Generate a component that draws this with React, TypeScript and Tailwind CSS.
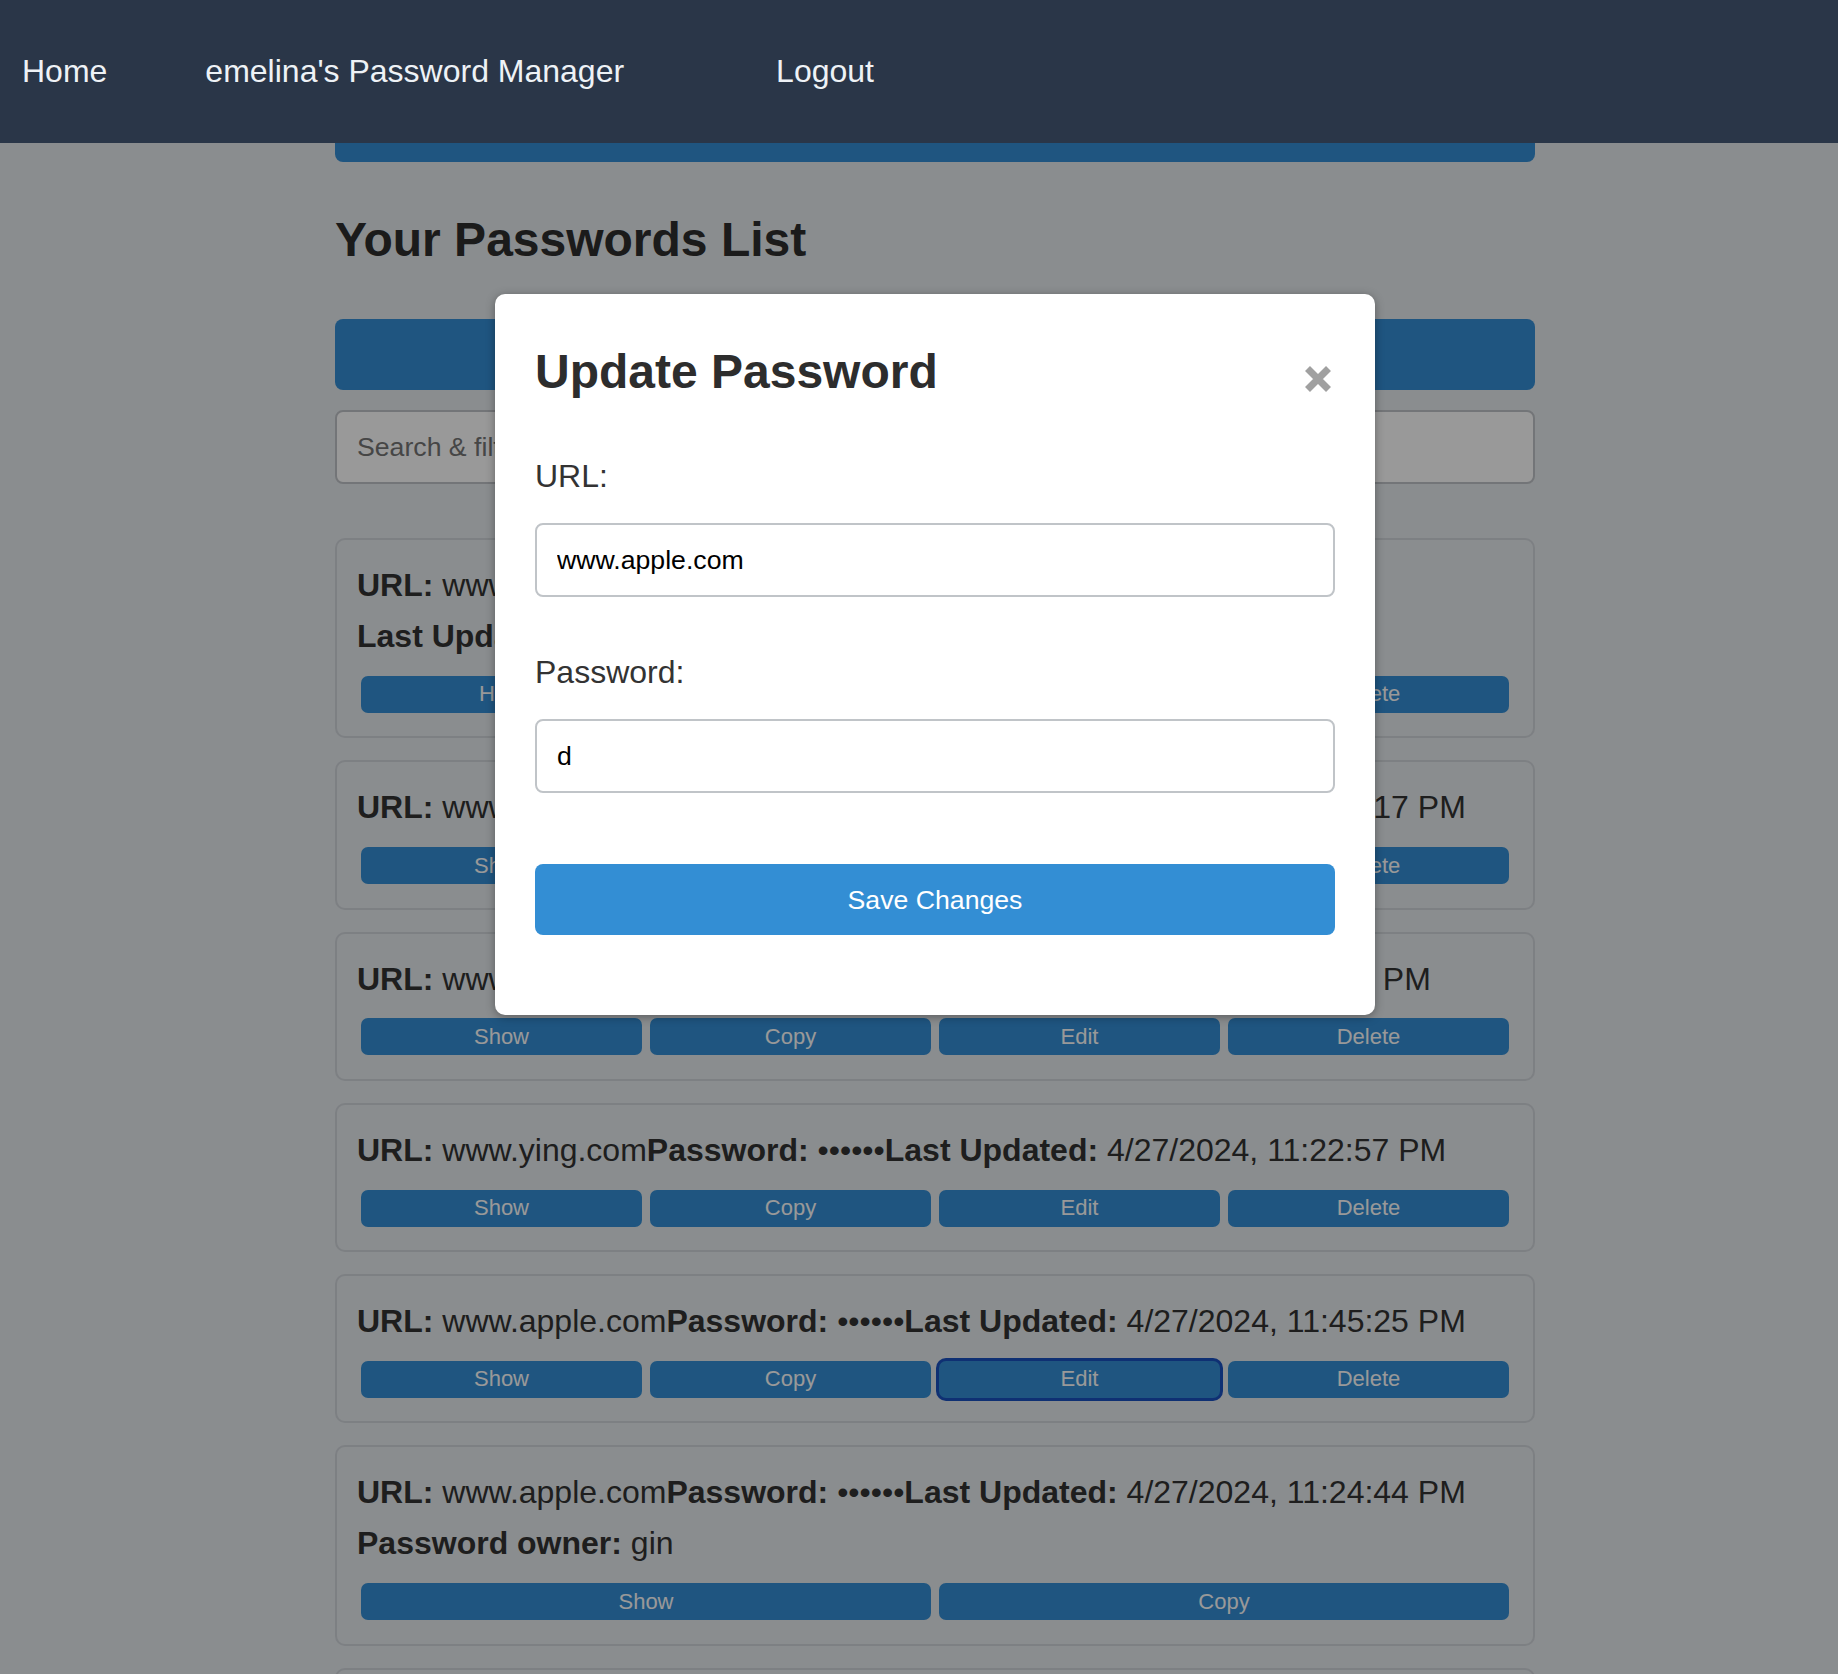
import React from 'react'

type Entry = {
	url: string
	password: string
	updated: string
	owner?: string
	shown?: boolean
	focused?: boolean
}

const entries: Entry[] = [
	{ url: 'www.google.com', password: 'qwerty12345678', updated: '4/27/2024, 11:50:02 PM', shown: true },
	{ url: 'www.apple.com', password: '••••••', updated: '4/27/2024, 11:31:17 PM' },
	{ url: 'www.ying.com', password: '••••••', updated: '4/27/2024, 9:08:43 PM' },
	{ url: 'www.ying.com', password: '••••••', updated: '4/27/2024, 11:22:57 PM' },
	{ url: 'www.apple.com', password: '••••••', updated: '4/27/2024, 11:45:25 PM', focused: true },
	{ url: 'www.apple.com', password: '••••••', updated: '4/27/2024, 11:24:44 PM', owner: 'gin' },
	{ url: 'www.ying.com', password: '••••••', updated: '4/27/2024, 11:12:08 PM' },
]

function ActionButton({ label, focused }: { label: string; focused?: boolean }) {
	return (
		<button
			className={
				'mx-[4px] my-[3.5px] h-[37px] flex-1 rounded-[7px] bg-[#348ed5] text-[22px] leading-[26px] text-white ' +
				(focused ? 'ring-[3px] ring-[#1a50c0]' : '')
			}
		>
			{label}
		</button>
	)
}

function PasswordCard({ entry }: { entry: Entry }) {
	const shared = !!entry.owner
	return (
		<div className="rounded-[10px] border-2 border-[#d1d5db] p-[20px] text-[32px] leading-[51.2px] text-[#333]">
			{entry.shown ? (
				<>
					<div>
						<strong>URL:</strong> {entry.url}
						<strong>Password:</strong> {entry.password}
					</div>
					<div>
						<strong>Last Updated:</strong> {entry.updated}
					</div>
				</>
			) : (
				<div>
					<strong>URL:</strong> {entry.url}
					<strong>Password:</strong> {entry.password}
					<strong>Last Updated:</strong> {entry.updated}
				</div>
			)}
			{shared && (
				<div>
					<strong>Password owner:</strong> {entry.owner}
				</div>
			)}
			<div className="mt-[10px] flex">
				<ActionButton label={entry.shown ? 'Hide' : 'Show'} />
				<ActionButton label="Copy" />
				{!shared && <ActionButton label="Edit" focused={entry.focused} />}
				{!shared && <ActionButton label="Delete" />}
			</div>
		</div>
	)
}

function CloseIcon() {
	return (
		<svg width="28" height="28" viewBox="0 0 28 28">
			<path d="M3.5 3.5 L24.5 24.5 M24.5 3.5 L3.5 24.5" stroke="#a0a0a0" strokeWidth="7" />
		</svg>
	)
}

export default function App() {
	return (
		<div className="relative h-[1674px] w-full overflow-hidden bg-[#e6ebee] font-['Liberation_Sans',Arial,sans-serif]">
			<nav className="relative z-30 flex h-[143px] items-center bg-[#2a3648] pb-[2px] pl-[22px] text-[32px] leading-[48px] text-[#eef2f6]">
				<a>Home</a>
				<a className="ml-[98px]">emelina's Password Manager</a>
				<a className="ml-[152px]">Logout</a>
			</nav>

			<main className="ml-[335px] w-[1200px]">
				<div className="h-[19px] rounded-b-[8px] bg-[#348ed5]" />
				<h2 className="mt-[50px] text-[48px] font-bold leading-[56px] text-[#2d2d2d]">
					Your Passwords List
				</h2>
				{/* add-password toggle, its label sits under the modal */}
				<button className="mt-[51px] block h-[71px] w-full rounded-[8px] bg-[#348ed5]" />
				<input
					className="mt-[20px] h-[74px] w-full rounded-[8px] border-2 border-[#c0c4c8] bg-white px-[20px] text-[26.67px] text-black placeholder:text-[#757575]"
					placeholder="Search & filter passwords by URL..."
				/>
				<div className="mt-[54px] flex flex-col gap-[22px]">
					{entries.map((e, i) => (
						<PasswordCard key={i} entry={e} />
					))}
				</div>
			</main>

			<div className="absolute inset-0 z-10 bg-black/40" />

			<div className="absolute left-[495px] top-[294px] z-20 w-[880px] rounded-[10px] bg-white px-[40px] pb-[80px] pt-[40px] shadow-[0_2px_10px_rgba(0,0,0,0.35)]">
				<div className="mt-[10px] flex items-start justify-between">
					<h2 className="text-[48px] font-bold leading-[56px] text-[#2d2d2d]">Update Password</h2>
					<button className="mr-[3px] mt-[21px]">
						<CloseIcon />
					</button>
				</div>
				<label className="mt-[52px] block text-[32px] leading-[48px] text-[#333]">URL:</label>
				<input
					className="mt-[23px] h-[74px] w-full rounded-[8px] border-2 border-[#c0c4c8] px-[20px] text-[26.67px] text-black"
					defaultValue="www.apple.com"
				/>
				<label className="mt-[51px] block text-[32px] leading-[48px] text-[#333]">Password:</label>
				<input
					className="mt-[23px] h-[74px] w-full rounded-[8px] border-2 border-[#c0c4c8] px-[20px] text-[26.67px] text-black"
					defaultValue="d"
				/>
				<button className="mt-[71px] h-[71px] w-full rounded-[8px] bg-[#338ed4] text-[26.67px] text-white">
					Save Changes
				</button>
			</div>
		</div>
	)
}
